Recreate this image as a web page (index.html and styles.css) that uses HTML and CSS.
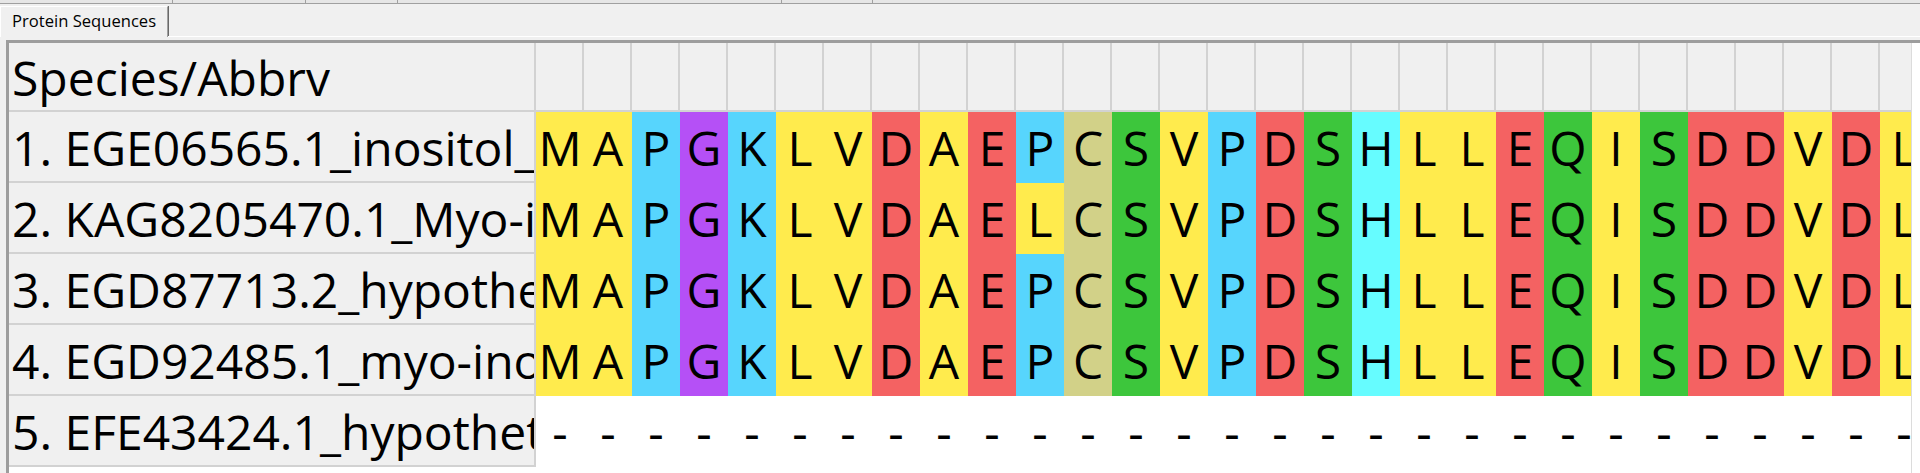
FILE: index.html
```html
<!DOCTYPE html>
<html>
<head>
<meta charset="utf-8">
<link rel="stylesheet" href="styles.css">
</head>
<body>
<div class="topstrip"><div class="seg s1"></div><div class="seg s2"></div><div class="seg s3"></div><div class="seg s4"></div><div class="seg s5"></div></div>
<div class="tabrow"><div class="tab">Protein Sequences</div><div class="tabfill"></div></div>
<div class="page">
<div class="frame">
<div class="clip">
<div class="grid">
<div class="nm hdn">Species/Abbrv</div>
<div class="hc"></div><div class="hc"></div><div class="hc"></div><div class="hc"></div><div class="hc"></div><div class="hc"></div><div class="hc"></div><div class="hc"></div><div class="hc"></div><div class="hc"></div><div class="hc"></div><div class="hc"></div><div class="hc"></div><div class="hc"></div><div class="hc"></div><div class="hc"></div><div class="hc"></div><div class="hc"></div><div class="hc"></div><div class="hc"></div><div class="hc"></div><div class="hc"></div><div class="hc"></div><div class="hc"></div><div class="hc"></div><div class="hc"></div><div class="hc"></div><div class="hc"></div><div class="hc"></div>

<div class="nm">1. EGE06565.1_inositol_phosphate_synthase</div>
<div class="r y">M</div><div class="r y">A</div><div class="r bl">P</div><div class="r pu">G</div><div class="r bl">K</div><div class="r y">L</div><div class="r y">V</div><div class="r rd">D</div><div class="r y">A</div><div class="r rd">E</div><div class="r bl">P</div><div class="r ol">C</div><div class="r gn">S</div><div class="r y">V</div><div class="r bl">P</div><div class="r rd">D</div><div class="r gn">S</div><div class="r cy">H</div><div class="r y">L</div><div class="r y">L</div><div class="r rd">E</div><div class="r gn">Q</div><div class="r y">I</div><div class="r gn">S</div><div class="r rd">D</div><div class="r rd">D</div><div class="r y">V</div><div class="r rd">D</div><div class="r y">L</div>

<div class="nm">2. KAG8205470.1_Myo-inositol-1-phosphate_synthase</div>
<div class="r y">M</div><div class="r y">A</div><div class="r bl">P</div><div class="r pu">G</div><div class="r bl">K</div><div class="r y">L</div><div class="r y">V</div><div class="r rd">D</div><div class="r y">A</div><div class="r rd">E</div><div class="r y">L</div><div class="r ol">C</div><div class="r gn">S</div><div class="r y">V</div><div class="r bl">P</div><div class="r rd">D</div><div class="r gn">S</div><div class="r cy">H</div><div class="r y">L</div><div class="r y">L</div><div class="r rd">E</div><div class="r gn">Q</div><div class="r y">I</div><div class="r gn">S</div><div class="r rd">D</div><div class="r rd">D</div><div class="r y">V</div><div class="r rd">D</div><div class="r y">L</div>

<div class="nm">3. EGD87713.2_hypothetical_protein</div>
<div class="r y">M</div><div class="r y">A</div><div class="r bl">P</div><div class="r pu">G</div><div class="r bl">K</div><div class="r y">L</div><div class="r y">V</div><div class="r rd">D</div><div class="r y">A</div><div class="r rd">E</div><div class="r bl">P</div><div class="r ol">C</div><div class="r gn">S</div><div class="r y">V</div><div class="r bl">P</div><div class="r rd">D</div><div class="r gn">S</div><div class="r cy">H</div><div class="r y">L</div><div class="r y">L</div><div class="r rd">E</div><div class="r gn">Q</div><div class="r y">I</div><div class="r gn">S</div><div class="r rd">D</div><div class="r rd">D</div><div class="r y">V</div><div class="r rd">D</div><div class="r y">L</div>

<div class="nm">4. EGD92485.1_myo-inositol-1-phosphate_synthase</div>
<div class="r y">M</div><div class="r y">A</div><div class="r bl">P</div><div class="r pu">G</div><div class="r bl">K</div><div class="r y">L</div><div class="r y">V</div><div class="r rd">D</div><div class="r y">A</div><div class="r rd">E</div><div class="r bl">P</div><div class="r ol">C</div><div class="r gn">S</div><div class="r y">V</div><div class="r bl">P</div><div class="r rd">D</div><div class="r gn">S</div><div class="r cy">H</div><div class="r y">L</div><div class="r y">L</div><div class="r rd">E</div><div class="r gn">Q</div><div class="r y">I</div><div class="r gn">S</div><div class="r rd">D</div><div class="r rd">D</div><div class="r y">V</div><div class="r rd">D</div><div class="r y">L</div>

<div class="nm">5. EFE43424.1_hypothetical_protein</div>
<div class="r">-</div><div class="r">-</div><div class="r">-</div><div class="r">-</div><div class="r">-</div><div class="r">-</div><div class="r">-</div><div class="r">-</div><div class="r">-</div><div class="r">-</div><div class="r">-</div><div class="r">-</div><div class="r">-</div><div class="r">-</div><div class="r">-</div><div class="r">-</div><div class="r">-</div><div class="r">-</div><div class="r">-</div><div class="r">-</div><div class="r">-</div><div class="r">-</div><div class="r">-</div><div class="r">-</div><div class="r">-</div><div class="r">-</div><div class="r">-</div><div class="r">-</div><div class="r">-</div>
</div>
</div>
</div>
</div>
</body>
</html>
```
FILE: styles.css
```css
html, body {
  margin: 0;
  height: 100%;
}
body {
  background: #f0f0f0;
  font-family: "Open Sans", "Noto Sans", sans-serif;
  color: #000;
  overflow: hidden;
}
.topstrip {
  display: flex;
  height: 3px;
  background: #e6e6e6;
  border-bottom: 1px solid #a0a0a0;
}
.seg {
  border-right: 1px solid #a0a0a0;
}
.s1 { width: 172px; }
.s2 { width: 132px; }
.s3 { width: 91px; }
.s4 { width: 383px; }
.s5 { width: 90px; }

.tabrow {
  display: flex;
  height: 33px;
}
.tab {
  box-sizing: border-box;
  width: 168px;
  margin-top: 2px;
  border-top: 1px solid #fff;
  border-left: 1px solid #fff;
  border-right: 1px solid #a0a0a0;
  box-shadow: 1px 0 0 #696969;
  font-size: 16.6px;
  line-height: 28px;
  padding-left: 11px;
  white-space: nowrap;
}
.tabfill {
  flex: 1;
  border-bottom: 1px solid #fff;
}
.page {
  box-sizing: border-box;
  height: calc(100% - 37px);
  padding: 3px 0 0 6px;
}
.frame {
  box-sizing: border-box;
  height: 100%;
  border-top: 3px solid #9d9d9d;
  border-left: 3px solid #9d9d9d;
  background: #fff;
}
.clip {
  width: 1902px;
  height: 100%;
  overflow: hidden;
  border-right: 1px solid #dcdcdc;
}
.grid {
  display: grid;
  grid-template-columns: 527px repeat(29, 48px);
  grid-template-rows: 69px repeat(5, 71px);
}
.nm {
  box-sizing: border-box;
  background: #f0f0f0;
  border-right: 2px solid #d2d2d2;
  border-bottom: 2px solid #d2d2d2;
  font-size: 48px;
  line-height: 71px;
  padding-left: 3px;
  white-space: nowrap;
  overflow: hidden;
}
.hdn {
  line-height: 69px;
}
.hc {
  box-sizing: border-box;
  background: #f0f0f0;
  border-right: 2px solid #d2d2d2;
  border-bottom: 2px solid #d2d2d2;
}
.r {
  font-size: 48px;
  line-height: 71px;
  text-align: center;
  overflow: hidden;
}
.y { background: #ffeb4d; }
.bl { background: #57d5fd; }
.pu { background: #b550f6; }
.rd { background: #f46262; }
.ol { background: #d2d188; }
.gn { background: #3dc63c; }
.cy { background: #66fcff; }
```
